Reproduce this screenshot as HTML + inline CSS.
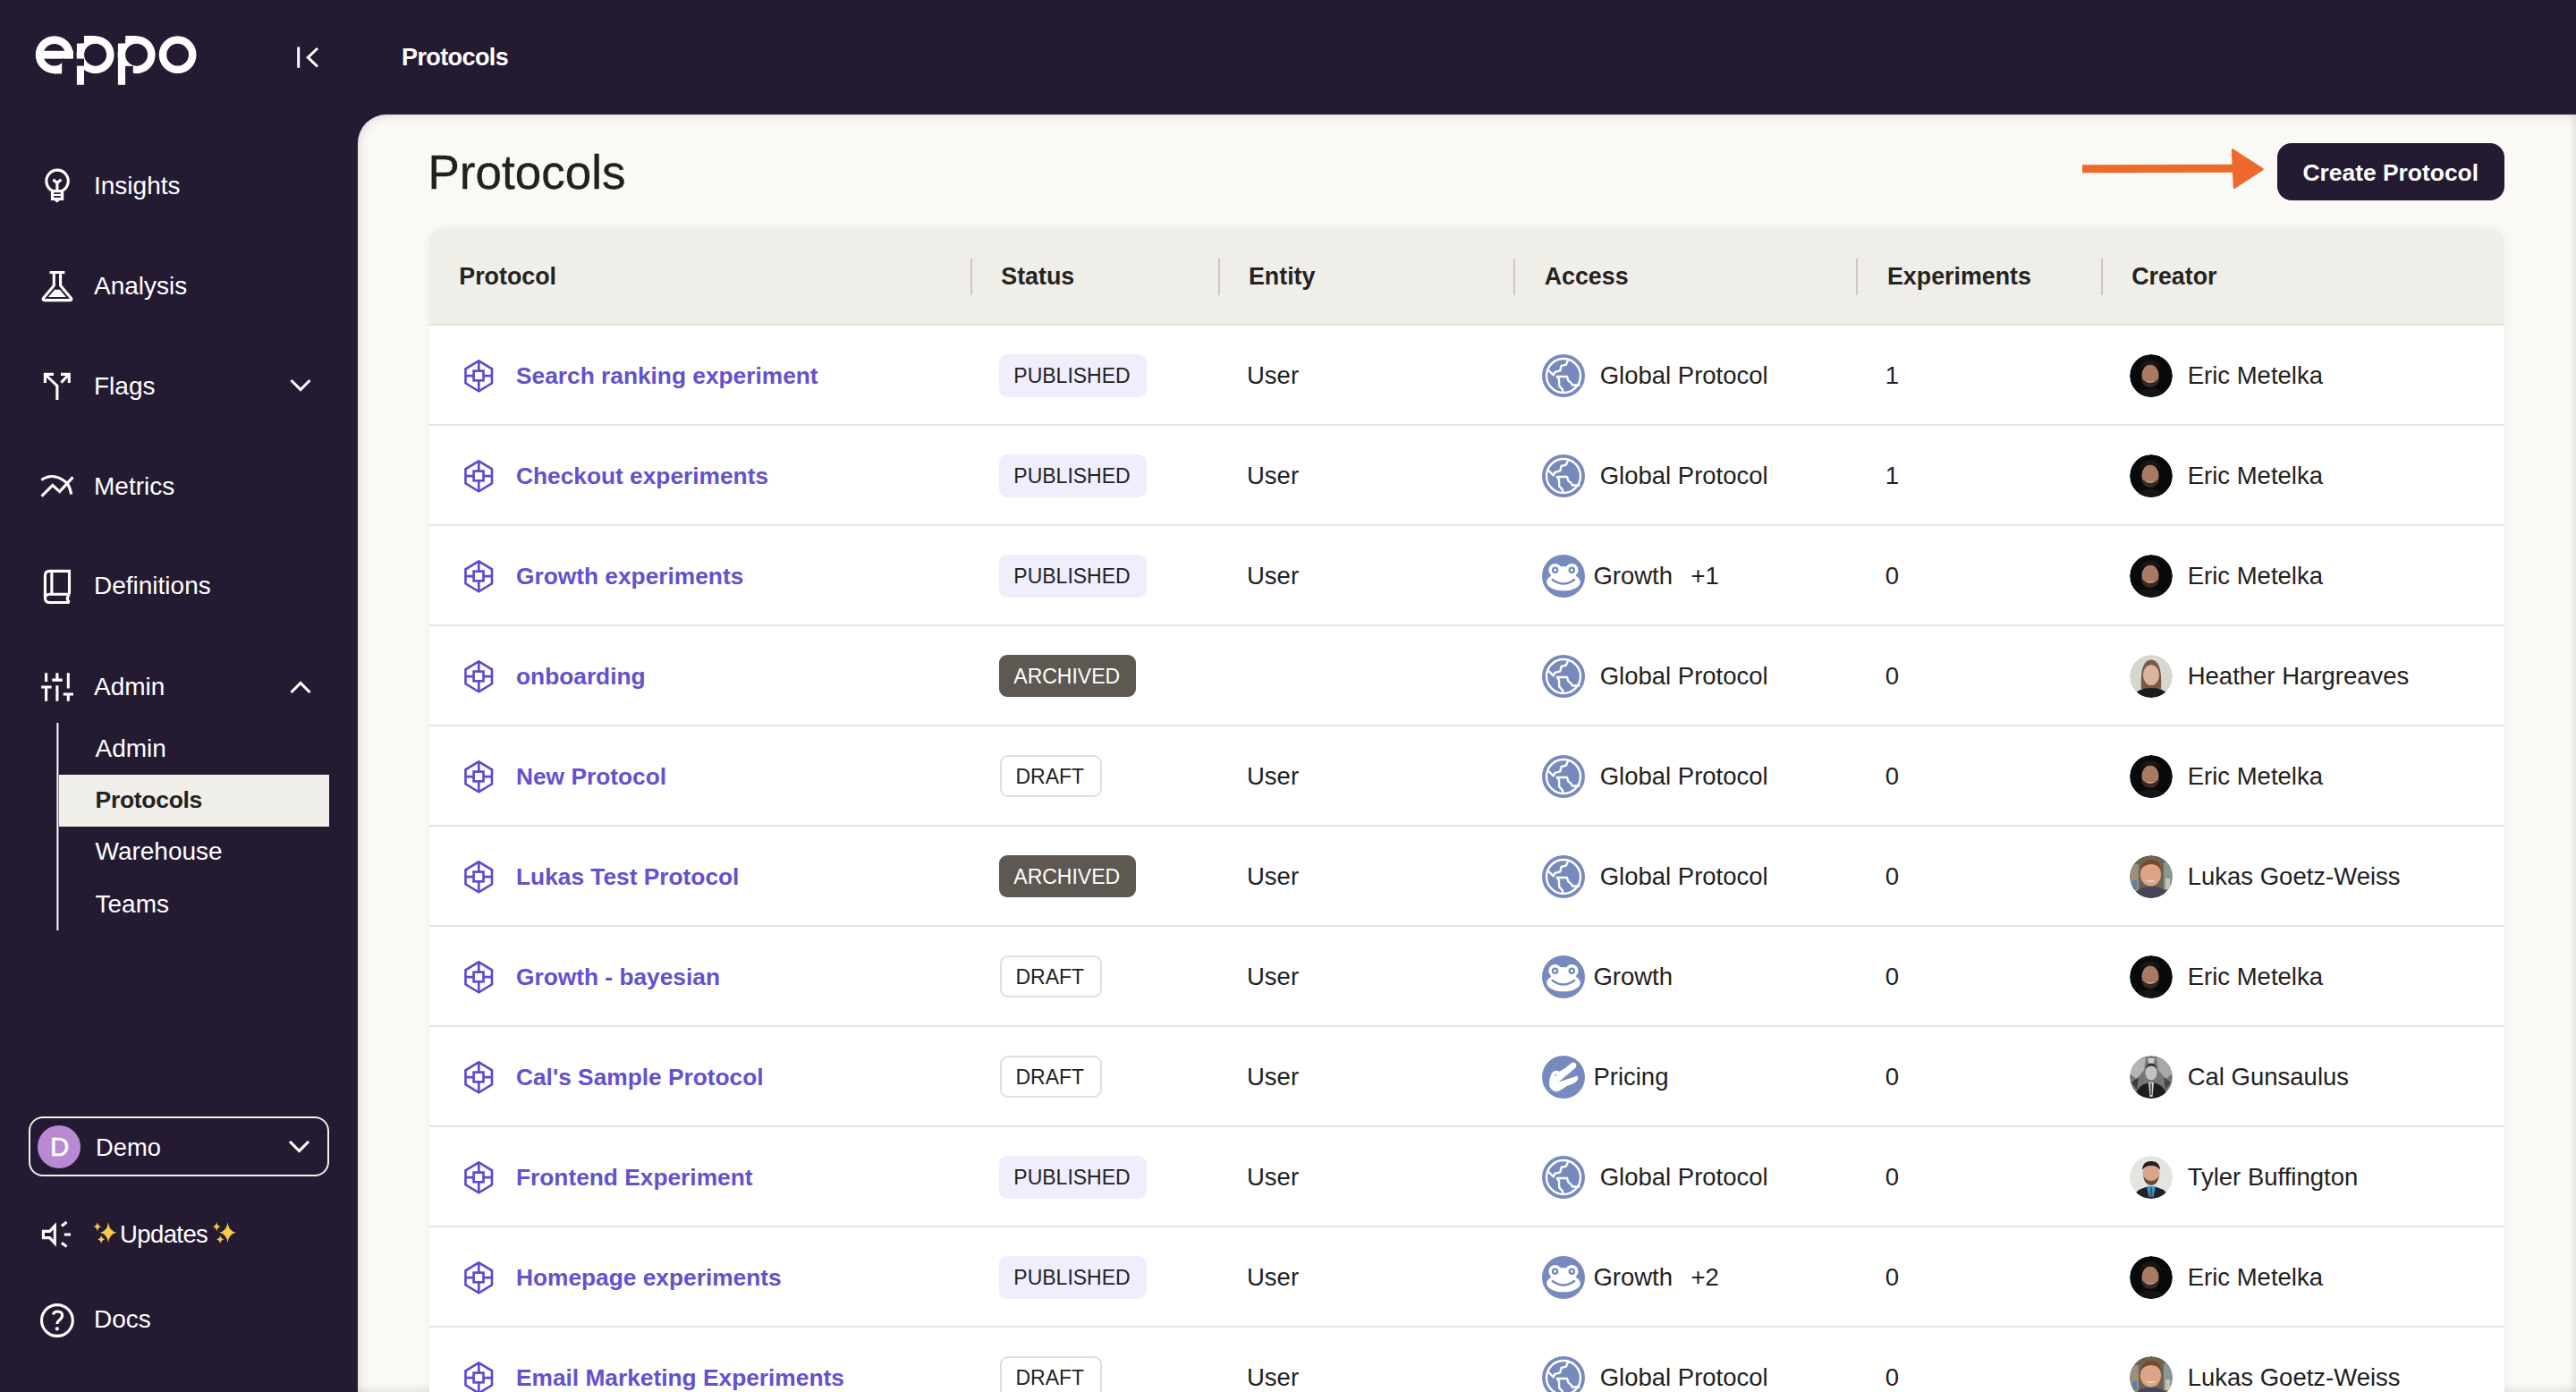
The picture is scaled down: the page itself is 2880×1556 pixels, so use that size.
<!DOCTYPE html>
<html><head><meta charset="utf-8"><title>Protocols</title>
<style>
html,body{margin:0;padding:0;}
body{width:2880px;height:1556px;overflow:hidden;position:relative;background:#241b32;font-family:'Liberation Sans',sans-serif;}
</style></head><body>
<svg style="position:absolute;left:0;top:0" width="380" height="110" viewBox="0 0 380 110">
<g fill="none" stroke="#fff">
<circle cx="60.8" cy="61.2" r="16.65" stroke-width="8.7"/>
<circle cx="106.6" cy="61.2" r="16.75" stroke-width="8.5"/>
<circle cx="152.6" cy="61.2" r="16.75" stroke-width="8.5"/>
<circle cx="198.6" cy="61.2" r="16.65" stroke-width="8.5"/>
</g>
<g fill="#fff">
<rect x="48" y="56.8" width="34" height="8.9"/>
<rect x="60" y="73.9" width="9.2" height="8.5"/>
<rect x="94" y="40" width="12.6" height="9"/>
<rect x="140.1" y="40" width="12.5" height="9"/>
</g>
<g fill="#241b32">
<rect x="69.2" y="65.7" width="14" height="18"/>
<rect x="84" y="36" width="10" height="12.6"/>
<rect x="130" y="36" width="10.1" height="12.6"/>
</g>
<g fill="#fff">
<rect x="85.9" y="48.6" width="8.1" height="46.2"/>
<rect x="131.9" y="48.6" width="8.2" height="46.2"/>
</g>
<g fill="#241b32">
<rect x="85.5" y="65.7" width="8.5" height="7.9"/>
<rect x="140.1" y="73.9" width="8.7" height="9.5"/>
</g>
<g stroke="#fff" stroke-width="3" fill="none">
<line x1="333.7" y1="52.5" x2="333.7" y2="75.8"/>
<polyline points="355,54 344.3,64.2 355,74.5"/>
</g>
</svg><div style="position:absolute;left:449px;top:51.05px;font-size:27px;line-height:27px;font-weight:bold;color:#fff;white-space:nowrap;letter-spacing:-0.6px;">Protocols</div><svg style="position:absolute;left:0;top:0" width="400" height="1556" viewBox="0 0 400 1556">
<g fill="none" stroke="#fff" stroke-width="3.1" stroke-linejoin="miter">
<!-- bulb -->
<path d="M58.5 213.2 A12.2 12.2 0 1 1 69.6 213.2"/>
<path d="M59.4 200.8 L63.9 204.5 L68.4 200.8 M63.9 204.5 V212"/>
<!-- flask -->
<path d="M55.6 304.5 H72.4 M60.3 306 V319.3 L48.3 333.6 Q47.5 335.6 49.8 335.6 H78.2 Q80.5 335.6 79.7 333.6 L67.6 319.3 V306"/>
<!-- flags -->
<path d="M50.4 427.9 V418.4 H60 M51.5 419.5 L63.9 431.5 V447"/>
<path d="M68 418.4 H77.3 V427.9 M76.2 419.5 L68.4 427.6"/>
<!-- metrics -->
<path d="M46.3 536.5 Q60 527 75 540 Q78.5 545 79.7 552.5"/>
<path d="M46.6 554.6 L58.8 542.4 L66.7 549.6 L81.5 533.4"/>
<!-- book -->
<path d="M77.5 664.3 V638.4 H55.4 Q50.4 638.4 50.4 643.4 V668.5 Q50.4 673.5 55.4 673.5 H77.5"/>
<path d="M57.9 640 V662.7 M50.4 669 Q50.4 664.3 55.4 664.3 H77.5 M77.5 664.3 Q73.2 668.9 77.5 673.5"/>
<!-- sliders -->
<path d="M51.6 752.2 V761.9 M46.1 768 H57.6 M51.6 768 V783.8"/>
<path d="M63.9 752.2 V760.1 M58.3 760.1 H69.8 M63.9 766.3 V783.8"/>
<path d="M76.3 752.2 V769.6 M70.7 776 H82 M76.3 776 V783.8"/>
<!-- megaphone -->
<path d="M48.4 1376.4 H55.6 L61.3 1370.2 V1389.8 L55.6 1383.6 H48.4 Z"/>
<path d="M68.9 1370.4 L74.6 1366.1 M71.8 1380 H79 M68.9 1389.3 L74.6 1393.6"/>
<!-- question -->
<circle cx="63.9" cy="1476" r="17.4"/>
<path d="M59.3 1469.4 Q60.5 1466 64.4 1466 Q69.6 1466 69.6 1470.5 Q69.6 1473 66.5 1475.5 Q63.9 1477.5 63.9 1480"/>
<!-- chevrons -->
<polyline points="325.5,425 336,435.5 346.5,425"/>
<polyline points="325.5,774 336,763.5 346.5,774"/>
<polyline points="324,1276 334.5,1286.5 345,1276"/>
</g>
<g fill="#fff">
<path d="M56.9 212 H71.2 V224 H66.8 L63.7 226.5 L60.7 224 H56.9 Z"/>
<path d="M54 331.9 L61.2 323.8 H66.9 L73.8 331.9 Z"/>
<circle cx="63.9" cy="1485.3" r="2.1"/>
</g>
<g fill="#241b32">
<rect x="60.1" y="215.2" width="7.7" height="1.7"/>
<rect x="60.1" y="219" width="7.7" height="1.8"/>
</g>
<!-- sub nav line -->
<rect x="63.4" y="808" width="2" height="232" fill="#fff"/>
</svg><div style="position:absolute;left:105px;top:193.70px;font-size:28px;line-height:28px;font-weight:normal;color:#fff;white-space:nowrap;">Insights</div><div style="position:absolute;left:105px;top:305.70px;font-size:28px;line-height:28px;font-weight:normal;color:#fff;white-space:nowrap;">Analysis</div><div style="position:absolute;left:105px;top:417.70px;font-size:28px;line-height:28px;font-weight:normal;color:#fff;white-space:nowrap;">Flags</div><div style="position:absolute;left:105px;top:529.70px;font-size:28px;line-height:28px;font-weight:normal;color:#fff;white-space:nowrap;">Metrics</div><div style="position:absolute;left:105px;top:641.20px;font-size:28px;line-height:28px;font-weight:normal;color:#fff;white-space:nowrap;">Definitions</div><div style="position:absolute;left:105px;top:753.50px;font-size:28px;line-height:28px;font-weight:normal;color:#fff;white-space:nowrap;">Admin</div><div style="position:absolute;left:66px;top:866px;width:302px;height:57.5px;background:#f0efea"></div><div style="position:absolute;left:106.5px;top:822.80px;font-size:28px;line-height:28px;font-weight:normal;color:#fff;white-space:nowrap;">Admin</div><div style="position:absolute;left:106.5px;top:881.48px;font-size:26.5px;line-height:26.5px;font-weight:bold;color:#25221f;white-space:nowrap;letter-spacing:-0.3px;">Protocols</div><div style="position:absolute;left:106.5px;top:938.40px;font-size:28px;line-height:28px;font-weight:normal;color:#fff;white-space:nowrap;">Warehouse</div><div style="position:absolute;left:106.5px;top:996.60px;font-size:28px;line-height:28px;font-weight:normal;color:#fff;white-space:nowrap;">Teams</div><div style="position:absolute;left:32px;top:1247.6px;width:331.5px;height:63.5px;border:2.4px solid #f0efea;border-radius:16px"></div><div style="position:absolute;left:41.8px;top:1258px;width:48.2px;height:48.2px;border-radius:50%;background:#b98ad3"></div><div style="position:absolute;left:56px;top:1266.92px;font-size:29.5px;line-height:29.5px;font-weight:normal;color:#fff;white-space:nowrap;-webkit-text-stroke:0.5px #fff;">D</div><div style="position:absolute;left:107px;top:1268.50px;font-size:27.3px;line-height:27.3px;font-weight:normal;color:#fff;white-space:nowrap;">Demo</div><svg style="position:absolute;left:0;top:1340px" width="300" height="70" viewBox="0 1340 300 70">
<defs><path id="star" d="M0 -1 Q0.12 -0.12 1 0 Q0.12 0.12 0 1 Q-0.12 0.12 -1 0 Q-0.12 -0.12 0 -1Z" fill="#f6cb45"/></defs>
<use href="#star" transform="translate(121.1 1377.8) scale(9.5 11.5)"/>
<use href="#star" transform="translate(108.9 1371.2) scale(4.6 5.2)"/>
<use href="#star" transform="translate(113.2 1385.4) scale(4.2 4.8)"/>
<use href="#star" transform="translate(254.5 1377.8) scale(9.5 11.5)"/>
<use href="#star" transform="translate(242.2 1371.2) scale(4.6 5.2)"/>
<use href="#star" transform="translate(246.2 1385.4) scale(4.2 4.8)"/>
</svg><div style="position:absolute;left:134px;top:1365.62px;font-size:27.5px;line-height:27.5px;font-weight:normal;color:#fff;white-space:nowrap;letter-spacing:-0.6px;">Updates</div><div style="position:absolute;left:105px;top:1461.20px;font-size:28px;line-height:28px;font-weight:normal;color:#fff;white-space:nowrap;">Docs</div><div style="position:absolute;left:400px;top:128px;width:2480px;height:1428px;background:#faf9f5;border-top-left-radius:32px;box-shadow:inset 0 0 12px rgba(0,0,0,0.17)"></div><div style="position:absolute;left:478.5px;top:165.55px;font-size:53px;line-height:53px;font-weight:normal;color:#23211e;white-space:nowrap;-webkit-text-stroke:0.35px #23211e;">Protocols</div><div style="position:absolute;left:2545.7px;top:160px;width:254.3px;height:64px;border-radius:16px;background:#241b32"></div><div style="position:absolute;left:2574.5px;top:179.86px;font-size:26.4px;line-height:26.4px;font-weight:bold;color:#fff;white-space:nowrap;">Create Protocol</div><svg style="position:absolute;left:2300px;top:150px" width="250" height="80" viewBox="2300 150 250 80">
<path d="M2328 188.7 L2500 188.2" stroke="#ee6a2c" stroke-width="9" fill="none"/>
<path d="M2496 167.5 L2529.5 189.1 L2498 209.8 Z" fill="#ee6a2c" stroke="#ee6a2c" stroke-width="2.5" stroke-linejoin="round"/>
</svg><div style="position:absolute;left:480px;top:255px;width:2320px;height:1400px;background:#fff;border-radius:16px 16px 0 0;box-shadow:0 0 12px rgba(0,0,0,0.05)"></div><div style="position:absolute;left:480px;top:255px;width:2320px;height:107px;background:#f0eee9;border-radius:16px 16px 0 0"></div><div style="position:absolute;left:1085px;top:288.5px;width:2px;height:41px;background:#cdc8c1"></div><div style="position:absolute;left:1361.7px;top:288.5px;width:2px;height:41px;background:#cdc8c1"></div><div style="position:absolute;left:1691.8px;top:288.5px;width:2px;height:41px;background:#cdc8c1"></div><div style="position:absolute;left:2074.6px;top:288.5px;width:2px;height:41px;background:#cdc8c1"></div><div style="position:absolute;left:2348.6px;top:288.5px;width:2px;height:41px;background:#cdc8c1"></div><div style="position:absolute;left:513.3px;top:296.22px;font-size:26.8px;line-height:26.8px;font-weight:bold;color:#25231f;white-space:nowrap;">Protocol</div><div style="position:absolute;left:1119.3px;top:296.22px;font-size:26.8px;line-height:26.8px;font-weight:bold;color:#25231f;white-space:nowrap;">Status</div><div style="position:absolute;left:1396px;top:296.22px;font-size:26.8px;line-height:26.8px;font-weight:bold;color:#25231f;white-space:nowrap;">Entity</div><div style="position:absolute;left:1726.7px;top:296.22px;font-size:26.8px;line-height:26.8px;font-weight:bold;color:#25231f;white-space:nowrap;">Access</div><div style="position:absolute;left:2110px;top:296.22px;font-size:26.8px;line-height:26.8px;font-weight:bold;color:#25231f;white-space:nowrap;">Experiments</div><div style="position:absolute;left:2383.2px;top:296.22px;font-size:26.8px;line-height:26.8px;font-weight:bold;color:#25231f;white-space:nowrap;">Creator</div><div style="position:absolute;left:480px;top:362px;width:2320px;height:2px;background:#e7e4de"></div><div style="position:absolute;left:480px;top:474px;width:2320px;height:2px;background:#e7e4de"></div><div style="position:absolute;left:480px;top:586px;width:2320px;height:2px;background:#e7e4de"></div><div style="position:absolute;left:480px;top:698px;width:2320px;height:2px;background:#e7e4de"></div><div style="position:absolute;left:480px;top:810px;width:2320px;height:2px;background:#e7e4de"></div><div style="position:absolute;left:480px;top:922px;width:2320px;height:2px;background:#e7e4de"></div><div style="position:absolute;left:480px;top:1034px;width:2320px;height:2px;background:#e7e4de"></div><div style="position:absolute;left:480px;top:1146px;width:2320px;height:2px;background:#e7e4de"></div><div style="position:absolute;left:480px;top:1258px;width:2320px;height:2px;background:#e7e4de"></div><div style="position:absolute;left:480px;top:1370px;width:2320px;height:2px;background:#e7e4de"></div><div style="position:absolute;left:480px;top:1482px;width:2320px;height:2px;background:#e7e4de"></div><svg width="0" height="0" style="position:absolute">
<defs>
<g id="hex" fill="none" stroke="#5d4bcb" stroke-width="2.65">
<path d="M16.3 1.3 L31 10.3 V26.3 L16.3 35.3 L1.5 26.3 V10.3 Z"/>
<rect x="10.6" y="12.6" width="10.9" height="10.7"/>
<path d="M16.3 1.3 V12.6 M16.3 23.3 V35.3 M1.5 18.1 H10.6 M21.5 18.1 H31"/>
</g>
<g id="globe">
<circle cx="24" cy="24" r="24" fill="#778abd"/>
<g fill="none" stroke="#fff" stroke-width="2.4" stroke-linejoin="round">
<circle cx="24" cy="24" r="19"/>
<path d="M6.9 17.5 L12.75 23.3 L14.5 19.9 L20.3 18.4 L21.6 13 L26.8 11.7 L28.9 6.9 L29.3 5.2"/>
<path d="M42.4 34.5 L34 34.5 L32.4 31.9 L29.3 29.3 L28 25 L16.8 25 L19 28 L19.2 35.4 L22.9 39.3 L23.3 42.3"/>
</g>
</g>
<g id="frog">
<circle cx="24" cy="24" r="24" fill="#778abd"/>
<g fill="#fff">
<circle cx="14.6" cy="17.2" r="7.2"/>
<circle cx="33.3" cy="17.2" r="7.2"/>
<ellipse cx="24" cy="30.5" rx="18.8" ry="9.8"/>
<rect x="10" y="13.2" width="28" height="14"/>
</g>
<g fill="none" stroke="#778abd" stroke-width="2.3" stroke-linecap="round">
<circle cx="14.6" cy="17.2" r="2.6"/>
<circle cx="33.3" cy="17.2" r="2.6"/>
<path d="M11.6 28 Q24 37 36.2 28"/>
</g>
</g>
<g id="croc">
<circle cx="24" cy="24" r="24" fill="#778abd"/>
<path fill="#fff" d="M12.5 18.1 Q15 16.3 17.3 17.1 L19.6 17.8 Q26 14.5 32.6 8.6 Q35.2 6.6 37.4 8.4 Q39.2 10.4 37.6 13.4 L18.6 29.6 L39 22.8 Q40.6 22.8 40.2 25.8 Q39.5 29.2 35 31.2 L27.5 34 Q23 37.5 19 39.6 Q14 41.2 10.8 38 Q7.8 35 8 31 Q8.3 25 10 21.5 Q11 18.8 12.5 18.1Z"/>
<path d="M14.4 22.2 Q15.2 20.6 16.3 22.4" stroke="#778abd" stroke-width="1.1" fill="none"/>
</g>
</defs></svg><svg style="position:absolute;left:519px;top:401.5px" width="33" height="37" viewBox="0 0 33 37"><use href="#hex"/></svg><div style="position:absolute;left:577px;top:406.64px;font-size:26.3px;line-height:26.3px;font-weight:bold;color:#6351ce;white-space:nowrap;">Search ranking experiment</div><div style="position:absolute;left:1117px;top:396px;width:164.6px;height:47.6px;background:#f0edfd;border-radius:9px"></div><div style="position:absolute;left:1133.3px;top:409.45px;font-size:23px;line-height:23px;font-weight:normal;color:#24221f;white-space:nowrap;">PUBLISHED</div><div style="position:absolute;left:1394px;top:405.62px;font-size:27.5px;line-height:27.5px;font-weight:normal;color:#23211e;white-space:nowrap;">User</div><svg style="position:absolute;left:1724px;top:396px" width="48" height="48" viewBox="0 0 48 48"><use href="#globe"/></svg><div style="position:absolute;left:1788.7px;top:405.62px;font-size:27.5px;line-height:27.5px;font-weight:normal;color:#23211e;white-space:nowrap;">Global Protocol</div><div style="position:absolute;left:2107.8px;top:405.62px;font-size:27.5px;line-height:27.5px;font-weight:normal;color:#23211e;white-space:nowrap;">1</div><svg style="position:absolute;left:2381px;top:396px;border-radius:50%" width="48" height="48" viewBox="0 0 48 48"><clipPath id="c2381396"><circle cx="24" cy="24" r="24"/></clipPath><g clip-path="url(#c2381396)"><circle cx="24" cy="24" r="24" fill="#08090a"/>
<path d="M11 19 Q11 6 23 6 Q35 6 35.5 19 Q33 12 23 12 Q14 12 11 19Z" fill="#17120f"/>
<ellipse cx="23" cy="23.5" rx="9.6" ry="12" fill="#a87a64"/>
<path d="M12.5 14 Q14 7 23 7.5 Q32 7.5 34 15 Q30 11.5 23 11.5 Q16 11.5 12.5 14Z" fill="#1e1713"/>
<path d="M12.8 26 Q14 37 23 37 Q32 37 33.4 26 Q29 31.5 23 31.5 Q17 31.5 12.8 26Z" fill="#3a2921"/>
<path d="M17.5 30 Q23 33 28.5 30 Q23 31.5 17.5 30Z" fill="#e8e0da"/>
<path d="M6 46 Q12 38 23 38.5 Q34 38 42 46 Q34 50 24 50 Q14 50 6 46Z" fill="#151515"/></g></svg><div style="position:absolute;left:2445.7px;top:405.62px;font-size:27.5px;line-height:27.5px;font-weight:normal;color:#23211e;white-space:nowrap;">Eric Metelka</div><svg style="position:absolute;left:519px;top:513.5px" width="33" height="37" viewBox="0 0 33 37"><use href="#hex"/></svg><div style="position:absolute;left:577px;top:518.64px;font-size:26.3px;line-height:26.3px;font-weight:bold;color:#6351ce;white-space:nowrap;">Checkout experiments</div><div style="position:absolute;left:1117px;top:508px;width:164.6px;height:47.6px;background:#f0edfd;border-radius:9px"></div><div style="position:absolute;left:1133.3px;top:521.45px;font-size:23px;line-height:23px;font-weight:normal;color:#24221f;white-space:nowrap;">PUBLISHED</div><div style="position:absolute;left:1394px;top:517.62px;font-size:27.5px;line-height:27.5px;font-weight:normal;color:#23211e;white-space:nowrap;">User</div><svg style="position:absolute;left:1724px;top:508px" width="48" height="48" viewBox="0 0 48 48"><use href="#globe"/></svg><div style="position:absolute;left:1788.7px;top:517.62px;font-size:27.5px;line-height:27.5px;font-weight:normal;color:#23211e;white-space:nowrap;">Global Protocol</div><div style="position:absolute;left:2107.8px;top:517.62px;font-size:27.5px;line-height:27.5px;font-weight:normal;color:#23211e;white-space:nowrap;">1</div><svg style="position:absolute;left:2381px;top:508px;border-radius:50%" width="48" height="48" viewBox="0 0 48 48"><clipPath id="c2381508"><circle cx="24" cy="24" r="24"/></clipPath><g clip-path="url(#c2381508)"><circle cx="24" cy="24" r="24" fill="#08090a"/>
<path d="M11 19 Q11 6 23 6 Q35 6 35.5 19 Q33 12 23 12 Q14 12 11 19Z" fill="#17120f"/>
<ellipse cx="23" cy="23.5" rx="9.6" ry="12" fill="#a87a64"/>
<path d="M12.5 14 Q14 7 23 7.5 Q32 7.5 34 15 Q30 11.5 23 11.5 Q16 11.5 12.5 14Z" fill="#1e1713"/>
<path d="M12.8 26 Q14 37 23 37 Q32 37 33.4 26 Q29 31.5 23 31.5 Q17 31.5 12.8 26Z" fill="#3a2921"/>
<path d="M17.5 30 Q23 33 28.5 30 Q23 31.5 17.5 30Z" fill="#e8e0da"/>
<path d="M6 46 Q12 38 23 38.5 Q34 38 42 46 Q34 50 24 50 Q14 50 6 46Z" fill="#151515"/></g></svg><div style="position:absolute;left:2445.7px;top:517.62px;font-size:27.5px;line-height:27.5px;font-weight:normal;color:#23211e;white-space:nowrap;">Eric Metelka</div><svg style="position:absolute;left:519px;top:625.5px" width="33" height="37" viewBox="0 0 33 37"><use href="#hex"/></svg><div style="position:absolute;left:577px;top:630.64px;font-size:26.3px;line-height:26.3px;font-weight:bold;color:#6351ce;white-space:nowrap;">Growth experiments</div><div style="position:absolute;left:1117px;top:620px;width:164.6px;height:47.6px;background:#f0edfd;border-radius:9px"></div><div style="position:absolute;left:1133.3px;top:633.45px;font-size:23px;line-height:23px;font-weight:normal;color:#24221f;white-space:nowrap;">PUBLISHED</div><div style="position:absolute;left:1394px;top:629.62px;font-size:27.5px;line-height:27.5px;font-weight:normal;color:#23211e;white-space:nowrap;">User</div><svg style="position:absolute;left:1724px;top:620px" width="48" height="48" viewBox="0 0 48 48"><use href="#frog"/></svg><div style="position:absolute;left:1781.4px;top:629.62px;font-size:27.5px;line-height:27.5px;font-weight:normal;color:#23211e;white-space:nowrap;">Growth</div><div style="position:absolute;left:1890.5px;top:629.62px;font-size:27.5px;line-height:27.5px;font-weight:normal;color:#23211e;white-space:nowrap;">+1</div><div style="position:absolute;left:2107.8px;top:629.62px;font-size:27.5px;line-height:27.5px;font-weight:normal;color:#23211e;white-space:nowrap;">0</div><svg style="position:absolute;left:2381px;top:620px;border-radius:50%" width="48" height="48" viewBox="0 0 48 48"><clipPath id="c2381620"><circle cx="24" cy="24" r="24"/></clipPath><g clip-path="url(#c2381620)"><circle cx="24" cy="24" r="24" fill="#08090a"/>
<path d="M11 19 Q11 6 23 6 Q35 6 35.5 19 Q33 12 23 12 Q14 12 11 19Z" fill="#17120f"/>
<ellipse cx="23" cy="23.5" rx="9.6" ry="12" fill="#a87a64"/>
<path d="M12.5 14 Q14 7 23 7.5 Q32 7.5 34 15 Q30 11.5 23 11.5 Q16 11.5 12.5 14Z" fill="#1e1713"/>
<path d="M12.8 26 Q14 37 23 37 Q32 37 33.4 26 Q29 31.5 23 31.5 Q17 31.5 12.8 26Z" fill="#3a2921"/>
<path d="M17.5 30 Q23 33 28.5 30 Q23 31.5 17.5 30Z" fill="#e8e0da"/>
<path d="M6 46 Q12 38 23 38.5 Q34 38 42 46 Q34 50 24 50 Q14 50 6 46Z" fill="#151515"/></g></svg><div style="position:absolute;left:2445.7px;top:629.62px;font-size:27.5px;line-height:27.5px;font-weight:normal;color:#23211e;white-space:nowrap;">Eric Metelka</div><svg style="position:absolute;left:519px;top:737.5px" width="33" height="37" viewBox="0 0 33 37"><use href="#hex"/></svg><div style="position:absolute;left:577px;top:742.64px;font-size:26.3px;line-height:26.3px;font-weight:bold;color:#6351ce;white-space:nowrap;">onboarding</div><div style="position:absolute;left:1117px;top:732px;width:152.8px;height:47.4px;background:#5e5852;border-radius:9px"></div><div style="position:absolute;left:1133.3px;top:745.45px;font-size:23px;line-height:23px;font-weight:normal;color:#fff;white-space:nowrap;">ARCHIVED</div><svg style="position:absolute;left:1724px;top:732px" width="48" height="48" viewBox="0 0 48 48"><use href="#globe"/></svg><div style="position:absolute;left:1788.7px;top:741.62px;font-size:27.5px;line-height:27.5px;font-weight:normal;color:#23211e;white-space:nowrap;">Global Protocol</div><div style="position:absolute;left:2107.8px;top:741.62px;font-size:27.5px;line-height:27.5px;font-weight:normal;color:#23211e;white-space:nowrap;">0</div><svg style="position:absolute;left:2381px;top:732px;border-radius:50%" width="48" height="48" viewBox="0 0 48 48"><clipPath id="c2381732"><circle cx="24" cy="24" r="24"/></clipPath><g clip-path="url(#c2381732)"><circle cx="24" cy="24" r="24" fill="#d5d7d1"/>
<path d="M13 38 Q11 6 24 5.5 Q37 6 35 38Z" fill="#7a5a44"/>
<ellipse cx="24" cy="22.5" rx="9" ry="11.5" fill="#dcb39c"/>
<path d="M15.5 16 Q18 8 24 8 Q29 8 32.5 16 Q28 11 24 11 Q19 11 15.5 16Z" fill="#7a5a44"/>
<path d="M5 44 Q12 36.5 24 37 Q36 36.5 43 44 Q35 49 24 49 Q13 49 5 44Z" fill="#1b1b1f"/></g></svg><div style="position:absolute;left:2445.7px;top:741.62px;font-size:27.5px;line-height:27.5px;font-weight:normal;color:#23211e;white-space:nowrap;">Heather Hargreaves</div><svg style="position:absolute;left:519px;top:849.5px" width="33" height="37" viewBox="0 0 33 37"><use href="#hex"/></svg><div style="position:absolute;left:577px;top:854.64px;font-size:26.3px;line-height:26.3px;font-weight:bold;color:#6351ce;white-space:nowrap;">New Protocol</div><div style="position:absolute;left:1117.5px;top:844px;width:110px;height:43px;border:2px solid #e3dfd8;border-radius:9px;background:#fff"></div><div style="position:absolute;left:1135.5px;top:857.45px;font-size:23px;line-height:23px;font-weight:normal;color:#24221f;white-space:nowrap;">DRAFT</div><div style="position:absolute;left:1394px;top:853.62px;font-size:27.5px;line-height:27.5px;font-weight:normal;color:#23211e;white-space:nowrap;">User</div><svg style="position:absolute;left:1724px;top:844px" width="48" height="48" viewBox="0 0 48 48"><use href="#globe"/></svg><div style="position:absolute;left:1788.7px;top:853.62px;font-size:27.5px;line-height:27.5px;font-weight:normal;color:#23211e;white-space:nowrap;">Global Protocol</div><div style="position:absolute;left:2107.8px;top:853.62px;font-size:27.5px;line-height:27.5px;font-weight:normal;color:#23211e;white-space:nowrap;">0</div><svg style="position:absolute;left:2381px;top:844px;border-radius:50%" width="48" height="48" viewBox="0 0 48 48"><clipPath id="c2381844"><circle cx="24" cy="24" r="24"/></clipPath><g clip-path="url(#c2381844)"><circle cx="24" cy="24" r="24" fill="#08090a"/>
<path d="M11 19 Q11 6 23 6 Q35 6 35.5 19 Q33 12 23 12 Q14 12 11 19Z" fill="#17120f"/>
<ellipse cx="23" cy="23.5" rx="9.6" ry="12" fill="#a87a64"/>
<path d="M12.5 14 Q14 7 23 7.5 Q32 7.5 34 15 Q30 11.5 23 11.5 Q16 11.5 12.5 14Z" fill="#1e1713"/>
<path d="M12.8 26 Q14 37 23 37 Q32 37 33.4 26 Q29 31.5 23 31.5 Q17 31.5 12.8 26Z" fill="#3a2921"/>
<path d="M17.5 30 Q23 33 28.5 30 Q23 31.5 17.5 30Z" fill="#e8e0da"/>
<path d="M6 46 Q12 38 23 38.5 Q34 38 42 46 Q34 50 24 50 Q14 50 6 46Z" fill="#151515"/></g></svg><div style="position:absolute;left:2445.7px;top:853.62px;font-size:27.5px;line-height:27.5px;font-weight:normal;color:#23211e;white-space:nowrap;">Eric Metelka</div><svg style="position:absolute;left:519px;top:961.5px" width="33" height="37" viewBox="0 0 33 37"><use href="#hex"/></svg><div style="position:absolute;left:577px;top:966.64px;font-size:26.3px;line-height:26.3px;font-weight:bold;color:#6351ce;white-space:nowrap;">Lukas Test Protocol</div><div style="position:absolute;left:1117px;top:956px;width:152.8px;height:47.4px;background:#5e5852;border-radius:9px"></div><div style="position:absolute;left:1133.3px;top:969.45px;font-size:23px;line-height:23px;font-weight:normal;color:#fff;white-space:nowrap;">ARCHIVED</div><div style="position:absolute;left:1394px;top:965.62px;font-size:27.5px;line-height:27.5px;font-weight:normal;color:#23211e;white-space:nowrap;">User</div><svg style="position:absolute;left:1724px;top:956px" width="48" height="48" viewBox="0 0 48 48"><use href="#globe"/></svg><div style="position:absolute;left:1788.7px;top:965.62px;font-size:27.5px;line-height:27.5px;font-weight:normal;color:#23211e;white-space:nowrap;">Global Protocol</div><div style="position:absolute;left:2107.8px;top:965.62px;font-size:27.5px;line-height:27.5px;font-weight:normal;color:#23211e;white-space:nowrap;">0</div><svg style="position:absolute;left:2381px;top:956px;border-radius:50%" width="48" height="48" viewBox="0 0 48 48"><clipPath id="c2381956"><circle cx="24" cy="24" r="24"/></clipPath><g clip-path="url(#c2381956)"><circle cx="24" cy="24" r="24" fill="#6f6454"/>
<rect x="0" y="10" width="10" height="30" fill="#9b8f7c"/>
<rect x="38" y="8" width="10" height="30" fill="#8a9692"/>
<rect x="3" y="28" width="5" height="10" fill="#5d7fa8"/>
<rect x="40" y="26" width="5" height="12" fill="#c9c2b4"/>
<ellipse cx="23.5" cy="21.5" rx="11.5" ry="13" fill="#dda487"/>
<path d="M12 16 Q14 5 24 5 Q34 5 35.5 16 Q31 10 24 10 Q17 10 12 16Z" fill="#76492f"/>
<path d="M17 27.5 Q23.5 32 30 27.5 Q23.5 30 17 27.5Z" fill="#fff"/>
<path d="M3 46 Q10 34 24 35 Q38 34 45 46 Q36 50 24 50 Q12 50 3 46Z" fill="#46435a"/></g></svg><div style="position:absolute;left:2445.7px;top:965.62px;font-size:27.5px;line-height:27.5px;font-weight:normal;color:#23211e;white-space:nowrap;">Lukas Goetz-Weiss</div><svg style="position:absolute;left:519px;top:1073.5px" width="33" height="37" viewBox="0 0 33 37"><use href="#hex"/></svg><div style="position:absolute;left:577px;top:1078.64px;font-size:26.3px;line-height:26.3px;font-weight:bold;color:#6351ce;white-space:nowrap;">Growth - bayesian</div><div style="position:absolute;left:1117.5px;top:1068px;width:110px;height:43px;border:2px solid #e3dfd8;border-radius:9px;background:#fff"></div><div style="position:absolute;left:1135.5px;top:1081.45px;font-size:23px;line-height:23px;font-weight:normal;color:#24221f;white-space:nowrap;">DRAFT</div><div style="position:absolute;left:1394px;top:1077.62px;font-size:27.5px;line-height:27.5px;font-weight:normal;color:#23211e;white-space:nowrap;">User</div><svg style="position:absolute;left:1724px;top:1068px" width="48" height="48" viewBox="0 0 48 48"><use href="#frog"/></svg><div style="position:absolute;left:1781.4px;top:1077.62px;font-size:27.5px;line-height:27.5px;font-weight:normal;color:#23211e;white-space:nowrap;">Growth</div><div style="position:absolute;left:2107.8px;top:1077.62px;font-size:27.5px;line-height:27.5px;font-weight:normal;color:#23211e;white-space:nowrap;">0</div><svg style="position:absolute;left:2381px;top:1068px;border-radius:50%" width="48" height="48" viewBox="0 0 48 48"><clipPath id="c23811068"><circle cx="24" cy="24" r="24"/></clipPath><g clip-path="url(#c23811068)"><circle cx="24" cy="24" r="24" fill="#08090a"/>
<path d="M11 19 Q11 6 23 6 Q35 6 35.5 19 Q33 12 23 12 Q14 12 11 19Z" fill="#17120f"/>
<ellipse cx="23" cy="23.5" rx="9.6" ry="12" fill="#a87a64"/>
<path d="M12.5 14 Q14 7 23 7.5 Q32 7.5 34 15 Q30 11.5 23 11.5 Q16 11.5 12.5 14Z" fill="#1e1713"/>
<path d="M12.8 26 Q14 37 23 37 Q32 37 33.4 26 Q29 31.5 23 31.5 Q17 31.5 12.8 26Z" fill="#3a2921"/>
<path d="M17.5 30 Q23 33 28.5 30 Q23 31.5 17.5 30Z" fill="#e8e0da"/>
<path d="M6 46 Q12 38 23 38.5 Q34 38 42 46 Q34 50 24 50 Q14 50 6 46Z" fill="#151515"/></g></svg><div style="position:absolute;left:2445.7px;top:1077.62px;font-size:27.5px;line-height:27.5px;font-weight:normal;color:#23211e;white-space:nowrap;">Eric Metelka</div><svg style="position:absolute;left:519px;top:1185.5px" width="33" height="37" viewBox="0 0 33 37"><use href="#hex"/></svg><div style="position:absolute;left:577px;top:1190.64px;font-size:26.3px;line-height:26.3px;font-weight:bold;color:#6351ce;white-space:nowrap;">Cal's Sample Protocol</div><div style="position:absolute;left:1117.5px;top:1180px;width:110px;height:43px;border:2px solid #e3dfd8;border-radius:9px;background:#fff"></div><div style="position:absolute;left:1135.5px;top:1193.45px;font-size:23px;line-height:23px;font-weight:normal;color:#24221f;white-space:nowrap;">DRAFT</div><div style="position:absolute;left:1394px;top:1189.62px;font-size:27.5px;line-height:27.5px;font-weight:normal;color:#23211e;white-space:nowrap;">User</div><svg style="position:absolute;left:1724px;top:1180px" width="48" height="48" viewBox="0 0 48 48"><use href="#croc"/></svg><div style="position:absolute;left:1781.4px;top:1189.62px;font-size:27.5px;line-height:27.5px;font-weight:normal;color:#23211e;white-space:nowrap;">Pricing</div><div style="position:absolute;left:2107.8px;top:1189.62px;font-size:27.5px;line-height:27.5px;font-weight:normal;color:#23211e;white-space:nowrap;">0</div><svg style="position:absolute;left:2381px;top:1180px;border-radius:50%" width="48" height="48" viewBox="0 0 48 48"><clipPath id="c23811180"><circle cx="24" cy="24" r="24"/></clipPath><g clip-path="url(#c23811180)"><circle cx="24" cy="24" r="24" fill="#777"/>
<path d="M0 20 Q4 4 18 2 L16 16 L8 26Z" fill="#b5b5b5"/>
<path d="M48 20 Q44 4 30 2 L32 16 L40 26Z" fill="#a8a8a8"/>
<path d="M2 30 L10 24 L8 38Z" fill="#3a3a3a"/>
<path d="M46 30 L38 24 L40 38Z" fill="#444"/>
<path d="M20 3 L28 3 L26 10 L22 10Z" fill="#d0d0d0"/>
<ellipse cx="24" cy="19" rx="6.5" ry="8.5" fill="#c2c2c2"/>
<path d="M17.5 15 Q19 8.5 24 8.5 Q29 8.5 30.5 15 Q28 11.5 24 11.5 Q20 11.5 17.5 15Z" fill="#2d2d2d"/>
<path d="M6 46 Q9 31 24 30 Q39 31 42 46 Q34 50 24 50 Q14 50 6 46Z" fill="#1e1e1e"/>
<path d="M21 30 L27 30 L25.5 46 L22.5 46Z" fill="#d8d8d8"/>
<path d="M23 31 L25 31 L24.8 44 L23.2 44Z" fill="#555"/></g></svg><div style="position:absolute;left:2445.7px;top:1189.62px;font-size:27.5px;line-height:27.5px;font-weight:normal;color:#23211e;white-space:nowrap;">Cal Gunsaulus</div><svg style="position:absolute;left:519px;top:1297.5px" width="33" height="37" viewBox="0 0 33 37"><use href="#hex"/></svg><div style="position:absolute;left:577px;top:1302.64px;font-size:26.3px;line-height:26.3px;font-weight:bold;color:#6351ce;white-space:nowrap;">Frontend Experiment</div><div style="position:absolute;left:1117px;top:1292px;width:164.6px;height:47.6px;background:#f0edfd;border-radius:9px"></div><div style="position:absolute;left:1133.3px;top:1305.45px;font-size:23px;line-height:23px;font-weight:normal;color:#24221f;white-space:nowrap;">PUBLISHED</div><div style="position:absolute;left:1394px;top:1301.62px;font-size:27.5px;line-height:27.5px;font-weight:normal;color:#23211e;white-space:nowrap;">User</div><svg style="position:absolute;left:1724px;top:1292px" width="48" height="48" viewBox="0 0 48 48"><use href="#globe"/></svg><div style="position:absolute;left:1788.7px;top:1301.62px;font-size:27.5px;line-height:27.5px;font-weight:normal;color:#23211e;white-space:nowrap;">Global Protocol</div><div style="position:absolute;left:2107.8px;top:1301.62px;font-size:27.5px;line-height:27.5px;font-weight:normal;color:#23211e;white-space:nowrap;">0</div><svg style="position:absolute;left:2381px;top:1292px;border-radius:50%" width="48" height="48" viewBox="0 0 48 48"><clipPath id="c23811292"><circle cx="24" cy="24" r="24"/></clipPath><g clip-path="url(#c23811292)"><circle cx="24" cy="24" r="24" fill="#e4e4e0"/>
<ellipse cx="24" cy="20.5" rx="9.5" ry="11.5" fill="#d9a48a"/>
<path d="M14 16 Q14.5 5.5 24 6 Q33.5 5.5 34 16 Q30 10.5 24 11 Q18 10.5 14 16Z" fill="#2a1e18"/>
<path d="M15.5 23 Q16.5 32.5 24 33 Q31.5 32.5 32.5 23 Q29 28 24 28 Q19 28 15.5 23Z" fill="#6b4a38"/>
<path d="M4 46 Q9 35 24 34 Q39 35 44 46 Q35 50 24 50 Q13 50 4 46Z" fill="#1f2230"/>
<path d="M19 34 L29 34 L26.5 46 L21.5 46Z" fill="#3d9ad6"/>
<path d="M23 35 L25 35 L25.8 46 L22.2 46Z" fill="#555a6a"/></g></svg><div style="position:absolute;left:2445.7px;top:1301.62px;font-size:27.5px;line-height:27.5px;font-weight:normal;color:#23211e;white-space:nowrap;">Tyler Buffington</div><svg style="position:absolute;left:519px;top:1409.5px" width="33" height="37" viewBox="0 0 33 37"><use href="#hex"/></svg><div style="position:absolute;left:577px;top:1414.64px;font-size:26.3px;line-height:26.3px;font-weight:bold;color:#6351ce;white-space:nowrap;">Homepage experiments</div><div style="position:absolute;left:1117px;top:1404px;width:164.6px;height:47.6px;background:#f0edfd;border-radius:9px"></div><div style="position:absolute;left:1133.3px;top:1417.45px;font-size:23px;line-height:23px;font-weight:normal;color:#24221f;white-space:nowrap;">PUBLISHED</div><div style="position:absolute;left:1394px;top:1413.62px;font-size:27.5px;line-height:27.5px;font-weight:normal;color:#23211e;white-space:nowrap;">User</div><svg style="position:absolute;left:1724px;top:1404px" width="48" height="48" viewBox="0 0 48 48"><use href="#frog"/></svg><div style="position:absolute;left:1781.4px;top:1413.62px;font-size:27.5px;line-height:27.5px;font-weight:normal;color:#23211e;white-space:nowrap;">Growth</div><div style="position:absolute;left:1890.5px;top:1413.62px;font-size:27.5px;line-height:27.5px;font-weight:normal;color:#23211e;white-space:nowrap;">+2</div><div style="position:absolute;left:2107.8px;top:1413.62px;font-size:27.5px;line-height:27.5px;font-weight:normal;color:#23211e;white-space:nowrap;">0</div><svg style="position:absolute;left:2381px;top:1404px;border-radius:50%" width="48" height="48" viewBox="0 0 48 48"><clipPath id="c23811404"><circle cx="24" cy="24" r="24"/></clipPath><g clip-path="url(#c23811404)"><circle cx="24" cy="24" r="24" fill="#08090a"/>
<path d="M11 19 Q11 6 23 6 Q35 6 35.5 19 Q33 12 23 12 Q14 12 11 19Z" fill="#17120f"/>
<ellipse cx="23" cy="23.5" rx="9.6" ry="12" fill="#a87a64"/>
<path d="M12.5 14 Q14 7 23 7.5 Q32 7.5 34 15 Q30 11.5 23 11.5 Q16 11.5 12.5 14Z" fill="#1e1713"/>
<path d="M12.8 26 Q14 37 23 37 Q32 37 33.4 26 Q29 31.5 23 31.5 Q17 31.5 12.8 26Z" fill="#3a2921"/>
<path d="M17.5 30 Q23 33 28.5 30 Q23 31.5 17.5 30Z" fill="#e8e0da"/>
<path d="M6 46 Q12 38 23 38.5 Q34 38 42 46 Q34 50 24 50 Q14 50 6 46Z" fill="#151515"/></g></svg><div style="position:absolute;left:2445.7px;top:1413.62px;font-size:27.5px;line-height:27.5px;font-weight:normal;color:#23211e;white-space:nowrap;">Eric Metelka</div><svg style="position:absolute;left:519px;top:1521.5px" width="33" height="37" viewBox="0 0 33 37"><use href="#hex"/></svg><div style="position:absolute;left:577px;top:1526.64px;font-size:26.3px;line-height:26.3px;font-weight:bold;color:#6351ce;white-space:nowrap;">Email Marketing Experiments</div><div style="position:absolute;left:1117.5px;top:1516px;width:110px;height:43px;border:2px solid #e3dfd8;border-radius:9px;background:#fff"></div><div style="position:absolute;left:1135.5px;top:1529.45px;font-size:23px;line-height:23px;font-weight:normal;color:#24221f;white-space:nowrap;">DRAFT</div><div style="position:absolute;left:1394px;top:1525.62px;font-size:27.5px;line-height:27.5px;font-weight:normal;color:#23211e;white-space:nowrap;">User</div><svg style="position:absolute;left:1724px;top:1516px" width="48" height="48" viewBox="0 0 48 48"><use href="#globe"/></svg><div style="position:absolute;left:1788.7px;top:1525.62px;font-size:27.5px;line-height:27.5px;font-weight:normal;color:#23211e;white-space:nowrap;">Global Protocol</div><div style="position:absolute;left:2107.8px;top:1525.62px;font-size:27.5px;line-height:27.5px;font-weight:normal;color:#23211e;white-space:nowrap;">0</div><svg style="position:absolute;left:2381px;top:1516px;border-radius:50%" width="48" height="48" viewBox="0 0 48 48"><clipPath id="c23811516"><circle cx="24" cy="24" r="24"/></clipPath><g clip-path="url(#c23811516)"><circle cx="24" cy="24" r="24" fill="#6f6454"/>
<rect x="0" y="10" width="10" height="30" fill="#9b8f7c"/>
<rect x="38" y="8" width="10" height="30" fill="#8a9692"/>
<rect x="3" y="28" width="5" height="10" fill="#5d7fa8"/>
<rect x="40" y="26" width="5" height="12" fill="#c9c2b4"/>
<ellipse cx="23.5" cy="21.5" rx="11.5" ry="13" fill="#dda487"/>
<path d="M12 16 Q14 5 24 5 Q34 5 35.5 16 Q31 10 24 10 Q17 10 12 16Z" fill="#76492f"/>
<path d="M17 27.5 Q23.5 32 30 27.5 Q23.5 30 17 27.5Z" fill="#fff"/>
<path d="M3 46 Q10 34 24 35 Q38 34 45 46 Q36 50 24 50 Q12 50 3 46Z" fill="#46435a"/></g></svg><div style="position:absolute;left:2445.7px;top:1525.62px;font-size:27.5px;line-height:27.5px;font-weight:normal;color:#23211e;white-space:nowrap;">Lukas Goetz-Weiss</div>
</body></html>
